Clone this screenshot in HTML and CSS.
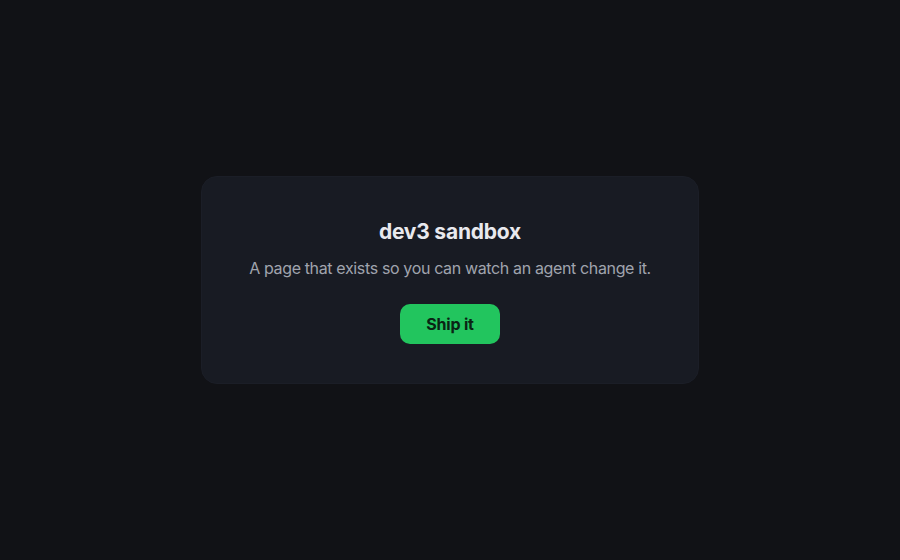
FILE: index.html
```html
<!DOCTYPE html>
<html>
<head>
<meta charset="utf-8">
<link rel="stylesheet" href="styles.css">
</head>
<body>
<main class="page">
  <section class="card">
    <h1 class="title">dev3 sandbox</h1>
    <p class="subtitle">A page that exists so you can watch an agent change it.</p>
    <button class="btn">Ship it</button>
  </section>
</main>
</body>
</html>
```
FILE: styles.css
```css
* { box-sizing: border-box; }
html, body { margin: 0; height: 100%; }
body {
  background: #111216;
  font-family: Inter, "Liberation Sans", sans-serif;
}
.page {
  height: 100%;
  display: flex;
  align-items: center;
  justify-content: center;
}
.card {
  width: 498px;
  background: #181b23;
  border: 1px solid #1b1e27;
  border-radius: 16px;
  padding: 39px 20px;
  display: flex;
  flex-direction: column;
  align-items: center;
  text-align: center;
}
.title {
  margin: 2px 0 10px;
  font-size: 21px;
  line-height: 28px;
  font-weight: 700;
  letter-spacing: -0.2px;
  color: #e8e9ee;
}
.subtitle {
  margin: 0 0 24px;
  font-size: 16px;
  line-height: 24px;
  letter-spacing: -0.36px;
  white-space: nowrap;
  color: #a0a4ae;
}
.btn {
  width: 100px;
  height: 40px;
  border: none;
  border-radius: 10px;
  background: #22c55e;
  color: #0a2414;
  font-family: inherit;
  font-size: 16px;
  font-weight: 700;
  letter-spacing: -0.2px;
  cursor: pointer;
}
```
